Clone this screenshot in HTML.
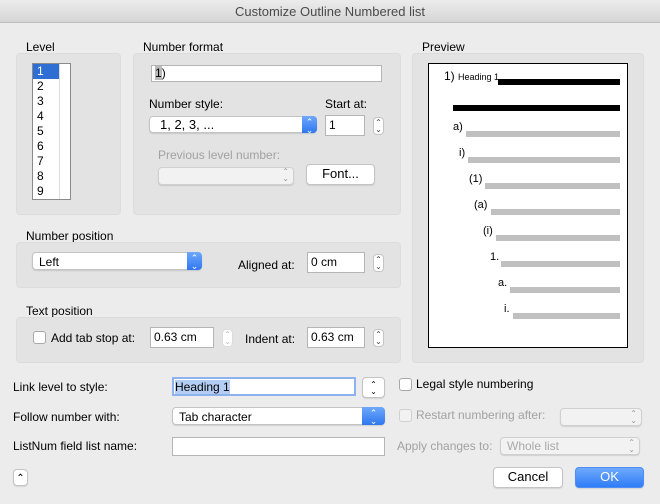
<!DOCTYPE html>
<html><head><meta charset="utf-8"><style>
*{box-sizing:border-box;margin:0;padding:0}
body{width:660px;height:504px;background:#ececec;font-family:"Liberation Sans",sans-serif;font-size:12px;color:#000;position:relative;overflow:hidden}
.a{position:absolute;white-space:nowrap}
.box{position:absolute;background:#e3e3e3;border:1px solid #dcdcdc;border-radius:4px}
.fld{position:absolute;background:#fff;border:1px solid #b5b5b5;font-size:12px;padding:2px 3px;line-height:14px}
.pop{position:absolute;background:#fff;border:1px solid #c4c4c4;border-radius:4px;box-shadow:0 1px 1px rgba(0,0,0,.12);padding:2px 6px;line-height:14px}
.pop .ar{position:absolute;right:-1px;top:-1px;bottom:-1px;width:15px;background:linear-gradient(#6ea8fb,#2f77f0);border-radius:0 4px 4px 0;color:#fff;font-size:9px;text-align:center;line-height:8px;padding-top:2px}
.dis{background:#f2f2f2;color:#a9a9a9;border-color:#d0d0d0}
.st{position:absolute;width:11px;height:18px;background:#fff;border:1px solid #c4c4c4;border-radius:4px;font-size:8px;line-height:7px;text-align:center;color:#444;padding-top:1px}
.btn{position:absolute;background:#fff;border:1px solid #c4c4c4;border-radius:4px;box-shadow:0 1px 1px rgba(0,0,0,.1);text-align:center;font-size:13px;line-height:18px}
.cb{position:absolute;width:13px;height:13px;background:#fff;border:1px solid #a8a8a8;border-radius:3px}
.g{color:#a2a2a2}
.bar{position:absolute;height:6px;background:#c0c0c0}
.pt{position:absolute;font-size:11px;white-space:nowrap}
</style></head><body>
<div class="a" style="left:0;top:0;width:660px;height:23px;background:linear-gradient(#ececec,#d6d6d6);border-bottom:1px solid #bdbdbd"></div>
<div class="a" style="left:0;top:4px;width:660px;text-align:center;font-size:13px;color:#4a4a4a">Customize Outline Numbered list</div>

<div class="a" style="left:26px;top:40px">Level</div>
<div class="box" style="left:16px;top:53px;width:105px;height:162px"></div>
<div class="a" style="left:32px;top:63px;width:39px;height:137px;background:#fff;border:1px solid #8a8a8a"></div>
<div class="a" style="left:59px;top:64px;width:1px;height:135px;background:#ddd"></div>
<div class="a" style="left:33px;top:64px;width:26px;height:15px;background:#2f6fd3"></div>
<div class="a" style="left:37px;top:64px;line-height:15px;font-size:12px"><span style="color:#fff">1</span><br>2<br>3<br>4<br>5<br>6<br>7<br>8<br>9</div>

<div class="a" style="left:143px;top:40px">Number format</div>
<div class="box" style="left:133px;top:53px;width:268px;height:162px"></div>
<div class="fld" style="left:151px;top:65px;width:231px;height:17px;padding:0 3px"><span style="background:#b9b9b9">1</span>)</div>
<div class="a" style="left:149px;top:97px">Number style:</div>
<div class="pop" style="left:149px;top:116px;width:168px;height:17px;padding:0 10px;font-size:13px;line-height:15px">1, 2, 3, ...<div class="ar">⌃<br>⌄</div></div>
<div class="a" style="left:325px;top:97px">Start at:</div>
<div class="fld" style="left:325px;top:115px;width:40px;height:21px">1</div>
<div class="st" style="left:373px;top:117px">⌃<br>⌄</div>
<div class="a g" style="left:158px;top:148px">Previous level number:</div>
<div class="pop dis" style="left:158px;top:167px;width:136px;height:18px"><span style="position:absolute;right:4px;top:0;font-size:8px;line-height:7px;color:#999">⌃<br>⌄</span></div>
<div class="btn" style="left:306px;top:164px;width:69px;height:21px">Font...</div>

<div class="a" style="left:422px;top:40px">Preview</div>
<div class="box" style="left:412px;top:53px;width:232px;height:310px"></div>
<div class="a" style="left:428px;top:63px;width:200px;height:285px;background:#fff;border:1px solid #000"></div>
<div class="pt" style="left:444px;top:69px;font-size:12px">1) <span style="font-size:9px">Heading 1</span></div>
<div class="a" style="left:498px;top:79px;width:122px;height:6px;background:#000"></div>
<div class="a" style="left:453px;top:105px;width:167px;height:6px;background:#000"></div>
<div class="pt" style="left:453px;top:121px">a)</div><div class="bar" style="left:466px;top:131px;width:154px"></div>
<div class="pt" style="left:459px;top:147px">i)</div><div class="bar" style="left:468px;top:157px;width:152px"></div>
<div class="pt" style="left:469px;top:173px">(1)</div><div class="bar" style="left:485px;top:183px;width:135px"></div>
<div class="pt" style="left:474px;top:199px">(a)</div><div class="bar" style="left:491px;top:209px;width:129px"></div>
<div class="pt" style="left:483px;top:225px">(i)</div><div class="bar" style="left:496px;top:235px;width:124px"></div>
<div class="pt" style="left:490px;top:251px">1.</div><div class="bar" style="left:501px;top:261px;width:119px"></div>
<div class="pt" style="left:498px;top:277px">a.</div><div class="bar" style="left:510px;top:287px;width:110px"></div>
<div class="pt" style="left:504px;top:303px">i.</div><div class="bar" style="left:513px;top:313px;width:107px"></div>

<div class="a" style="left:26px;top:229px">Number position</div>
<div class="box" style="left:16px;top:242px;width:385px;height:46px"></div>
<div class="pop" style="left:32px;top:252px;width:170px;height:18px">Left<div class="ar">⌃<br>⌄</div></div>
<div class="a" style="left:238px;top:258px">Aligned at:</div>
<div class="fld" style="left:307px;top:252px;width:58px;height:21px">0 cm</div>
<div class="st" style="left:373px;top:254px">⌃<br>⌄</div>

<div class="a" style="left:26px;top:304px">Text position</div>
<div class="box" style="left:16px;top:317px;width:385px;height:46px"></div>
<div class="cb" style="left:33px;top:331px"></div>
<div class="a" style="left:51px;top:331px">Add tab stop at:</div>
<div class="fld" style="left:150px;top:327px;width:64px;height:21px">0.63 cm</div>
<div class="st" style="left:222px;top:329px;color:#bbb;border-color:#ddd">⌃<br>⌄</div>
<div class="a" style="left:245px;top:332px">Indent at:</div>
<div class="fld" style="left:307px;top:327px;width:58px;height:21px">0.63 cm</div>
<div class="st" style="left:373px;top:329px">⌃<br>⌄</div>

<div class="a" style="left:13px;top:380px">Link level to style:</div>
<div class="fld" style="left:172px;top:377px;width:184px;height:19px;border:2px solid #8db2ee;padding:1px 1px;line-height:14px"><span style="background:#b4cdf2">Heading 1</span></div>
<div class="btn" style="left:362px;top:377px;width:23px;height:21px;font-size:8px;line-height:7px;padding-top:3px">⌃<br>⌄</div>
<div class="cb" style="left:399px;top:378px"></div>
<div class="a" style="left:416px;top:377px">Legal style numbering</div>

<div class="a" style="left:13px;top:410px">Follow number with:</div>
<div class="pop" style="left:172px;top:407px;width:213px;height:18px">Tab character<div class="ar" style="width:23px">⌃<br>⌄</div></div>
<div class="cb" style="left:399px;top:409px;border-color:#d0d0d0;background:#f2f2f2"></div>
<div class="a g" style="left:416px;top:408px">Restart numbering after:</div>
<div class="pop dis" style="left:560px;top:408px;width:82px;height:18px"><span style="position:absolute;right:4px;top:1px;font-size:8px;line-height:7px;color:#999">⌃<br>⌄</span></div>

<div class="a" style="left:13px;top:439px">ListNum field list name:</div>
<div class="fld" style="left:172px;top:437px;width:213px;height:19px"></div>
<div class="a g" style="left:397px;top:439px">Apply changes to:</div>
<div class="pop dis" style="left:500px;top:437px;width:140px;height:18px;line-height:13px">Whole list<span style="position:absolute;right:4px;top:1px;font-size:8px;line-height:7px;color:#999">⌃<br>⌄</span></div>

<div class="btn" style="left:13px;top:469px;width:15px;height:17px;font-size:10px;line-height:18px">⌃</div>
<div class="btn" style="left:493px;top:467px;width:70px;height:21px">Cancel</div>
<div class="btn" style="left:575px;top:467px;width:69px;height:21px;background:linear-gradient(#6eaafc,#2f7cf6);border-color:#4d8df5;color:#fff">OK</div>
</body></html>
